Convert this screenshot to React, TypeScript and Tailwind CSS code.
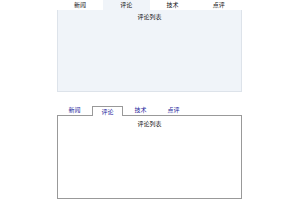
import React from "react";

const tabs = ["新闻", "评论", "技术", "点评"];

export default function App() {
  const font = { fontFamily: '"Noto Sans CJK SC", "Noto Sans", sans-serif' };
  return (
    <div className="w-[300px] h-[200px] bg-white relative" style={font}>
      <div className="ml-[57px] w-[185px]">
        <div className="flex h-[10px]">
          {tabs.map((t, i) => (
            <div
              key={t}
              className={`flex-1 flex items-center justify-center text-[6px] leading-none text-[#111] ${
                i === 1 ? "bg-[#f0f4f9]" : "bg-white"
              }`}
            >
              {t}
            </div>
          ))}
        </div>
        <div className="h-[82px] bg-[#f0f4f9] border border-[#dde3ea] border-t-0 flex justify-center pt-[4px]">
          <span className="text-[6px] leading-none text-[#111]">评论列表</span>
        </div>
      </div>
      <div className="ml-[57px] w-[185px] mt-[13px]">
        <div className="flex h-[10px] pl-[2px] gap-[2px]">
          {tabs.map((t, i) => (
            <div
              key={t}
              className={`w-[31px] flex items-center justify-center text-[6px] leading-none text-[#22229a] ${
                i === 1 ? "border border-b-0 border-[#999] bg-white relative top-[1px]" : ""
              }`}
            >
              {t}
            </div>
          ))}
        </div>
        <div className="h-[84px] border border-[#999] flex justify-center pt-[5px]">
          <span className="text-[6px] leading-none text-[#111]">评论列表</span>
        </div>
      </div>
    </div>
  );
}
